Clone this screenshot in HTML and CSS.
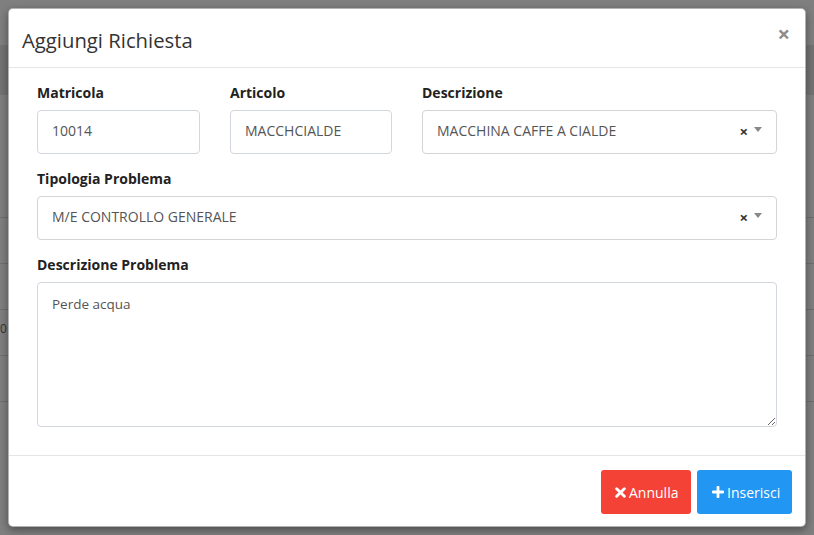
FILE: index.html
```html
<!DOCTYPE html>
<html lang="it">
<head>
    <meta charset="UTF-8">
    <title>Aggiungi Richiesta</title>
    <link rel="stylesheet" href="styles.css">
</head>
<body>

    <!-- pagina sotto il backdrop -->
    <div class="page-behind">
        <div class="topbar"></div>
        <div class="row-gap"></div>
        <div class="row"></div>
        <div class="row"></div>
        <div class="row"><span class="cell-text">0</span></div>
        <div class="row"></div>
        <div class="row"></div>
    </div>

    <div class="modal">
        <div class="modal-header">
            <h4>Aggiungi Richiesta</h4>
            <span class="close">&times;</span>
        </div>

        <div class="modal-body">
            <div class="grid-3">
                <div class="form-group">
                    <label>Matricola</label>
                    <div class="form-control">10014</div>
                </div>
                <div class="form-group">
                    <label>Articolo</label>
                    <div class="form-control">MACCHCIALDE</div>
                </div>
                <div class="form-group">
                    <label>Descrizione</label>
                    <div class="form-control select">
                        <span>MACCHINA CAFFE A CIALDE</span>
                        <span class="sel-clear">&times;</span>
                        <span class="sel-arrow"></span>
                    </div>
                </div>
            </div>

            <div class="form-group">
                <label>Tipologia Problema</label>
                <div class="form-control select">
                    <span>M/E CONTROLLO GENERALE</span>
                    <span class="sel-clear">&times;</span>
                    <span class="sel-arrow"></span>
                </div>
            </div>

            <div class="form-group last">
                <label for="descr">Descrizione Problema</label>
                <textarea id="descr" class="form-control textarea">Perde acqua</textarea>
            </div>
        </div>

        <div class="modal-footer">
            <button class="btn btn-red">
                <svg width="11" height="11" viewBox="0 0 10 10"><path d="M1.5 1.5 L8.5 8.5 M8.5 1.5 L1.5 8.5" stroke="#fff" stroke-width="2.6" stroke-linecap="round"/></svg>Annulla
            </button>
            <button class="btn btn-blue">
                <svg width="12" height="12" viewBox="0 0 12 12"><path d="M6 1 V11 M1 6 H11" stroke="#fff" stroke-width="2.8" stroke-linecap="round"/></svg>Inserisci
            </button>
        </div>
    </div>

</body>
</html>
```

FILE: styles.css
```css
body {
    margin: 0;
    background-color: #7f7f7f;
    font-family: "Open Sans", "Noto Sans", Arial, sans-serif;
    font-size: 14px;
    color: #333;
    height: 535px;
    overflow: hidden;
    position: relative;
}

.page-behind {
    height: 535px;
}

.topbar {
    height: 45px;
}

.row-gap {
    height: 50px;
    background-color: #737373;
    margin-bottom: 122px;
}

.row {
    height: 45px;
    border-top: 1px solid #6e6e6e;
    position: relative;
}

.cell-text {
    position: absolute;
    left: 0;
    top: 10px;
    color: #333;
    font-size: 12px;
}

.modal {
    position: absolute;
    top: 8px;
    left: 8px;
    width: 798px;
    height: 519px;
    box-sizing: border-box;
    background-color: #fff;
    border: 1px solid rgba(0, 0, 0, 0.3);
    border-radius: 5px;
    box-shadow: 0 3px 9px rgba(0, 0, 0, 0.4);
    display: flex;
    flex-direction: column;
}

.modal-header {
    height: 59px;
    box-sizing: border-box;
    border-bottom: 1px solid #e5e5e5;
    display: flex;
    align-items: center;
    justify-content: space-between;
    padding: 0 15px 0 13px;
}

.modal-header h4 {
    margin: 0;
    font-size: 20.3px;
    font-weight: normal;
    color: #333;
    padding-top: 3px;
}

.close {
    font-size: 22px;
    font-weight: bold;
    color: #8c8c8c;
    line-height: 1;
    margin-top: -10px;
}

.modal-body {
    padding: 15px 28px 13px 28px;
    flex: 1;
}

.grid-3 {
    display: grid;
    grid-template-columns: 163px 162px 355px;
    column-gap: 30px;
}

.form-group {
    margin-bottom: 15px;
}

.form-group.last {
    margin-bottom: 0;
}

.form-group label {
    display: block;
    font-weight: bold;
    color: #222;
    line-height: 20px;
    margin-bottom: 7px;
}

.form-control {
    box-sizing: border-box;
    height: 44px;
    border: 1px solid #d2d6de;
    border-radius: 4px;
    padding: 0 14px 3px;
    display: flex;
    align-items: center;
    color: #555;
    font-size: 14px;
    background-color: #fff;
}

.select {
    border-color: #d5d5d5;
}

.select span:first-child {
    flex: 1;
}

.sel-clear {
    font-weight: bold;
    color: #333;
    font-size: 15px;
    margin-right: 6px;
    margin-top: 1px;
}

.sel-arrow {
    width: 0;
    height: 0;
    border-left: 4px solid transparent;
    border-right: 4px solid transparent;
    border-top: 5px solid #888;
    margin-top: -3px;
}

.textarea {
    display: block;
    width: 100%;
    height: 145px;
    font-family: inherit;
    font-size: 13.5px;
    padding: 12px 14px;
    resize: vertical;
    outline: none;
}

.modal-footer {
    border-top: 1px solid #e5e5e5;
    padding: 14px 13px 12px;
    display: flex;
    justify-content: flex-end;
    gap: 6px;
}

.btn {
    height: 44px;
    border: none;
    border-radius: 3px;
    color: #fff;
    font-family: inherit;
    font-size: 14px;
    display: flex;
    align-items: center;
    gap: 3px;
    cursor: pointer;
}

.btn-red {
    width: 90px;
    padding: 0 0 0 14px;
    background-color: #f44336;
}

.btn-blue {
    width: 95px;
    padding: 0 0 0 15px;
    background-color: #2196f3;
}
```
